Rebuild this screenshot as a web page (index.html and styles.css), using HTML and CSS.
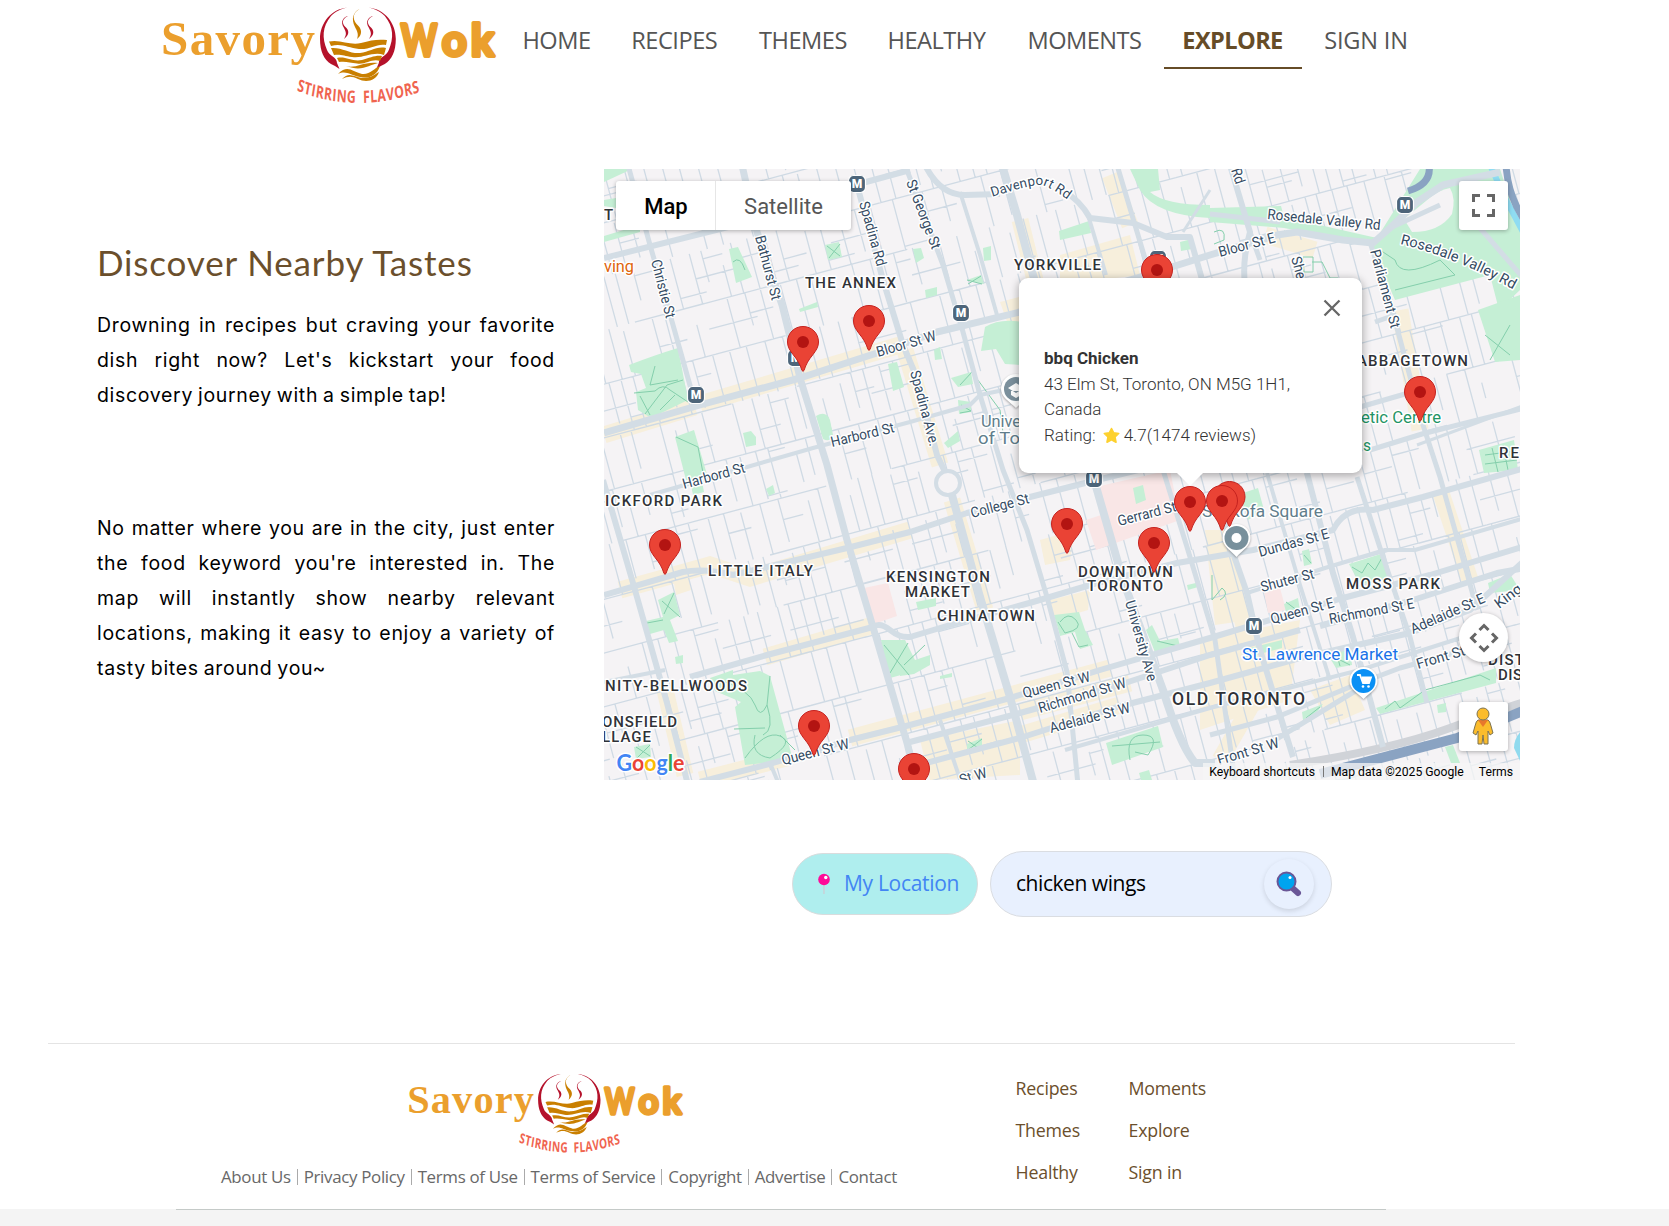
FILE: index.html
```html
<!DOCTYPE html>
<html lang="en">
<head>
<meta charset="utf-8">
<title>Savory Wok - Explore</title>
<link rel="stylesheet" href="styles.css">
</head>
<body>
<svg class="defs" width="0" height="0" aria-hidden="true">
  <symbol id="logo" viewBox="160 4 338 102" overflow="visible">
    <text class="logo-savory" x="161" y="54.500" textLength="154">Savory</text>
    <text class="logo-wok" y="56"><tspan x="401" textLength="36" lengthAdjust="spacingAndGlyphs">W</tspan><tspan x="442">o</tspan><tspan x="471">k</tspan></text>
    <g fill="#b5122b">
      <path d="M347.500 7.500C331 9 320 23 320 39C320 51 324 60 331 64L335 66L339.500 69L337 63C337 57 329 56 327 50C322 38 322 27 331 16C336 11 341 9 347.500 7.500Z"/>
      <path d="M347.500 7.500C331 9 320 23 320 39C320 51 324 60 331 64L335 66L339.500 69L337 63C337 57 329 56 327 50C322 38 322 27 331 16C336 11 341 9 347.500 7.500Z" transform="matrix(-1 0 0 1 715.800 0)"/>
      <path d="M348 16C340 20 343 25 346.500 28C350 32 348 36 344 39C347 34 346 32 344 28C340 22 343 17 348 16Z"/>
      <path d="M373 16C365 20 368 25 371.500 28C375 32 373 36 369 39C372 34 371 32 369 28C365 22 368 17 373 16Z"/>
    </g>
    <g fill="#c97f00">
      <path d="M359.500 9C351 14 353 21 358.500 26C363 31 361 36 357 39C359 34 357 31 355 27C351 19 353 12 359.500 9Z"/>
      <path d="M329 41.500C341 39 350 46 361 43C371 40 378 39 387 40L386 45C377 43 370 50 359 49C348 48 342 43 331 46Z"/>
      <path d="M331 48C342 47 350 54 360 53C370 52 376 46 386 48L384 55C373 51 363 59 352 57C344 56 341 54 334 55Z"/>
      <path d="M337 58C346 56 352 62 362 60C370 58 375 55 382 56L380 61C372 58 366 65 357 63.500C350 62.500 345 61 339 62Z"/>
      <path d="M346 66C356 69 363 61 378 63C369 65 362 72 346 66Z"/>
      <path d="M338 74C348 64 352 72 362 74C370 75 374 68 380 66C377 76 368 79 360 77C350 75 346 70 338 74Z"/>
      <path d="M342 79C349 71 354 77 362 78C370 78 374 75 379 72C376 81 366 83 358 79C352 76 348 76 342 79Z"/>
    </g>
    <g transform="scale(.72 1)">
      <path id="tagline" fill="none" d="M412 90.500Q498 116 592 89.500"/>
      <text class="logo-tag"><textPath href="#tagline">STIRRING&#160; FLAVORS</textPath></text>
    </g>
  </symbol>
</svg>

<header class="header">
  <svg class="logo"><use href="#logo"/></svg>
  <nav class="nav">
    <a>HOME</a><a>RECIPES</a><a>THEMES</a><a>HEALTHY</a><a>MOMENTS</a><a class="active">EXPLORE</a><a>SIGN IN</a>
  </nav>
</header>

<main class="main">
  <section class="intro">
    <h1>Discover Nearby Tastes</h1>
    <p>Drowning in recipes but craving your favorite dish right now? Let's kickstart your food discovery journey with a simple tap!</p>
    <p>No matter where you are in the city, just enter the food keyword you're interested in. The map will instantly show nearby relevant locations, making it easy to enjoy a variety of tasty bites around you~</p>
  </section>

  <section class="explore">
    <div class="map">
      <svg id="map" class="map-canvas" viewBox="604 169 916 611">
        <rect x="604" y="169" width="916" height="611" fill="#f5f3f5"/>
        <g id="shops" fill="#f7efdc"></g>
        <g id="minor" fill="none" stroke="#cfdae4" stroke-width="1.300"></g>
        <g fill="#f9e6e6">
          <path d="M1100 486L1170 470L1180 520L1096 550L1086 520L1104 514Z"/>
          <path d="M864 588L888 583L897 616L874 624Z"/><path d="M1264 592L1280 588L1286 610L1268 613Z"/>
        </g>
        <g id="parks" fill="#c5efd5"></g>
        <g id="paths" fill="none" stroke="#84cfac" stroke-width="1"></g>
        <path d="M1490 165L1506 200L1530 245" fill="none" stroke="#8fdcf2" stroke-width="6"/>
        <path d="M1506 165Q1508 200 1530 228M1429 165Q1432 184 1408 191" fill="none" stroke="#8aa3c2" stroke-width="7"/>
        <path d="M1514 748Q1514 738 1522 730V765Z" fill="#90daee"/>
        <path d="M1290 765Q1390 750 1450 728T1525 702" fill="none" stroke="#d0d3d8" stroke-width="8"/>
        <path d="M1320 774L1457 738L1525 710" fill="none" stroke="#8aa3c2" stroke-width="10"/>
        <g id="major" fill="none" stroke="#d3dde5" stroke-width="6" stroke-linejoin="round"></g>
        <circle cx="948" cy="483" r="12" fill="#f5f3f5" stroke="#d3dde5" stroke-width="4"/>
        <g id="metro"></g>
        <g id="labels"></g>
        <g id="places"></g>
        <g class="pois">
          <path d="M1001 389a15 15 0 1 1 30 0c0 8-8 12-15 19c-7-7-15-11-15-19Z" fill="#fff"/>
          <circle cx="1016" cy="389" r="12" fill="#7b909c"/>
          <path d="M1008 388l8-5l8 5l-8 5ZM1011 391v4l5 3l5-3v-4" fill="#fff"/>
          <path d="M1222.500 538a14 14 0 1 1 28 0c0 8-8 12-14 19c-6-7-14-11-14-19Z" fill="#fff"/>
          <circle cx="1236.500" cy="538" r="12" fill="#78909c"/><circle cx="1236.500" cy="538" r="5" fill="#fff"/>
          <path d="M1349.500 681a14 14 0 1 1 28 0c0 8-8 12-14 18c-6-6-14-10-14-18Z" fill="#fff"/>
          <circle cx="1363.500" cy="681" r="12" fill="#0a90f5"/>
          <path d="M1357 675h3l3 8h6l2-5.500h-9" fill="none" stroke="#fff" stroke-width="1.800"/>
          <path d="M1361.500 678h9l-2 5h-5.500Z" fill="#fff"/>
          <circle cx="1363" cy="686.500" r="1.300" fill="#fff"/><circle cx="1368.500" cy="686.500" r="1.300" fill="#fff"/>
        </g>
        <g id="markers"></g>
        <g class="google">
          <text x="616.500" y="770.500" textLength="68" lengthAdjust="spacingAndGlyphs"><tspan fill="#4285f4">G</tspan><tspan fill="#ea4335">o</tspan><tspan fill="#fbbc04">o</tspan><tspan fill="#4285f4">g</tspan><tspan fill="#34a853">l</tspan><tspan fill="#ea4335">e</tspan></text>
        </g>
      </svg>

      <div class="map-type"><button class="selected">Map</button><button>Satellite</button></div>
      <button class="control fullscreen"><svg width="23" height="23" viewBox="0 0 23 23"><path d="M1.500 8V1.500H8M15 1.500H21.500V8M21.500 15V21.500H15M8 21.500H1.500V15" fill="none" stroke="#666" stroke-width="3"/></svg></button>
      <button class="control camera"><svg width="30" height="30" viewBox="0 0 30 30"><path d="M10.500 7L15 2.500L19.500 7M10.500 23L15 27.500L19.500 23M7 10.500L2.500 15L7 19.500M23 10.500L27.500 15L23 19.500" fill="none" stroke="#666" stroke-width="3"/></svg></button>
      <button class="control pegman"><svg width="22" height="38" viewBox="0 0 22 38"><path d="M6 13H16Q18 14 19 19L21 26L18 28L16 24V37H12L11 28L10 37H6V24L4 28L1 26L3 19Q4 14 6 13Z" fill="#fbbc2c" stroke="#7d7351" stroke-width="1"/><path d="M6 13H16L11 20Z" fill="#e8772c"/><circle cx="11" cy="7" r="6" fill="#fbbc2c" stroke="#7d7351" stroke-width="1"/></svg></button>
      <div class="attribution"><span>Keyboard shortcuts</span><i></i><span>Map data ©2025 Google</span><span class="terms">Terms</span></div>

      <article class="info">
        <svg class="close" width="18" height="18" viewBox="0 0 18 18"><path d="M1.500 1.500L16.500 16.500M16.500 1.500L1.500 16.500" stroke="#666" stroke-width="2.300"/></svg>
        <strong>bbq Chicken</strong>
        <span>43 Elm St, Toronto, ON M5G 1H1,</span>
        <span>Canada</span>
        <span class="rating">Rating: <svg width="17" height="17" viewBox="0 0 17 17"><path d="M8.500 1.500L10.700 5.800L15.700 6.500L12 10L13 15.200L8.500 12.800L4 15.200L5 10L1.300 6.500L6.300 5.800Z" fill="#fdd12f" stroke="#fdd12f" stroke-width="1.600" stroke-linejoin="round"/></svg>4.7(1474 reviews)</span>
      </article>
    </div>

    <div class="search-row">
      <button class="location">
        <svg width="14" height="24" viewBox="0 0 14 24"><rect x="6.200" y="10" width="1.500" height="12" fill="#c9d2d8"/><circle cx="7" cy="7.500" r="5.800" fill="#ff0a98"/><circle cx="8.800" cy="5.500" r="1.700" fill="#fff"/></svg>
        <span>My Location</span>
      </button>
      <div class="search">
        <span>chicken wings</span>
        <button><svg width="26" height="26" viewBox="0 0 26 26"><path d="M16.500 17L22 22" stroke="#6a5797" stroke-width="6" stroke-linecap="round"/><circle cx="10.500" cy="10.500" r="9" fill="#00a4ef" stroke="#6a5797" stroke-width="2"/><circle cx="14" cy="6.500" r="1.500" fill="#fff"/></svg></button>
      </div>
    </div>
  </section>
</main>

<footer class="footer">
  <div class="footer-inner">
    <div class="footer-brand">
      <svg class="footer-logo"><use href="#logo"/></svg>
      <p class="legal"><a>About Us</a><i></i><a>Privacy Policy</a><i></i><a>Terms of Use</a><i></i><a>Terms of Service</a><i></i><a>Copyright</a><i></i><a>Advertise</a><i></i><a>Contact</a></p>
    </div>
    <div class="footer-links"><a>Recipes</a><a>Moments</a><a>Themes</a><a>Explore</a><a>Healthy</a><a>Sign in</a></div>
  </div>
</footer>
<div class="page-end"></div>
<script src="map.js"></script>
</body>
</html>
```
FILE: styles.css
```css
* { box-sizing: border-box; }
body { margin: 0; height: 1226px; overflow: hidden; display: flex; flex-direction: column; background: #fff; font-family: "Open Sans", "Noto Sans", sans-serif; color: #000; }
button { border: 0; padding: 0; font: inherit; }
.defs { position: absolute; }

.logo-savory { font: 700 49px "Liberation Serif", serif; fill: #eb9f2d; }
.logo-wok { font: 700 43px "Lato", sans-serif; fill: #eb9f2d; stroke: #eb9f2d; stroke-width: 4; stroke-linejoin: round; }
.logo-tag { font: 700 17px "Open Sans", sans-serif; letter-spacing: .6px; fill: #f0644f; }

.header { flex: none; height: 169px; padding: 4px 0 0 160px; display: flex; align-items: flex-start; }
.logo { width: 338px; height: 102px; overflow: visible; }
.nav { margin-left: 5px; display: grid; grid-template-columns: 107px 128.5px 129px 138px 158px 138px 129px; }
.nav a { height: 65px; padding-top: 20px; font-size: 23.6px; line-height: 33px; letter-spacing: -.5px; text-align: center; color: #555; white-space: nowrap; }
.nav a:last-child { letter-spacing: -.2px; }
.nav .active { font-weight: 700; letter-spacing: -.6px; color: #664c27; border-bottom: 2px solid #664c27; }

.main { flex: none; height: 874px; display: flex; padding-left: 97px; }
.intro { width: 458px; margin-right: 49px; padding-top: 68px; }
.intro h1 { margin: 0; font: 400 35px/50px "Lato", sans-serif; letter-spacing: .85px; color: #6b4f2c; white-space: nowrap; }
.intro p { margin: 21px 0 0; font: 400 19.5px/35.2px "Inter", sans-serif; letter-spacing: .68px; word-spacing: -1.2px; text-align: justify; }
.intro p + p { margin-top: 97px; }

.explore { width: 916px; }
.map { position: relative; width: 916px; height: 611px; overflow: hidden; font-family: "Roboto", sans-serif; }
.map-canvas { display: block; width: 916px; height: 611px; }
.map-canvas text { font-family: "Roboto", sans-serif; paint-order: stroke; stroke: #fff; stroke-width: 3px; stroke-linejoin: round; }
.map-canvas .street { font-size: 14.5px; fill: #344b63; }
.map-canvas .area { font-size: 15px; font-weight: 500; fill: #2f3237; }
.map-canvas .metro { font-size: 12px; font-weight: 900; fill: #fff; stroke: none; text-anchor: middle; }
.map-canvas .google text { font-family: "Lato", sans-serif; font-size: 23px; font-weight: 700; }
.pois { filter: drop-shadow(0 1px 1px rgba(0,0,0,.35)); }

.map-type { position: absolute; left: 12px; top: 12px; width: 235px; height: 49px; display: grid; grid-template-columns: 100px 135px; background: #fff; border-radius: 3px; box-shadow: 0 1px 4px rgba(0,0,0,.3); font-size: 22px; }
.map-type button { padding: 2px 0 0; background: none; color: #565656; }
.map-type .selected { padding-left: 1px; font-weight: 500; color: #000; border-right: 1px solid #e6e6e6; }
.control { position: absolute; left: 855px; width: 49px; height: 49px; display: grid; place-items: center; background: #fff; border-radius: 3px; box-shadow: 0 1px 4px rgba(0,0,0,.3); }
.fullscreen { top: 12px; }
.camera { top: 444px; border-radius: 50%; }
.pegman { top: 533px; }
.pegman svg { margin: -2px 2px 0 0; }
.attribution { position: absolute; right: 0; bottom: 0; height: 17px; display: flex; align-items: center; padding: 0 7px 0 6px; background: rgba(245,245,245,.75); font-size: 12.2px; white-space: nowrap; }
.attribution i { width: 1px; height: 11px; margin: 0 7px 0 8px; background: #777; }
.attribution .terms { margin-left: 15px; }

.info { position: absolute; left: 415px; top: 109px; width: 343px; height: 195px; padding: 68px 25px 0; background: #fff; border-radius: 9px; box-shadow: 0 2px 8px 1px rgba(0,0,0,.3); display: flex; flex-direction: column; font-weight: 300; font-size: 17.05px; line-height: 25.7px; color: #333; white-space: nowrap; }
.info::after { content: ""; position: absolute; left: 157px; bottom: -13px; border: 14px solid transparent; border-top-color: #fff; border-bottom: 0; }
.info strong { font-weight: 700; font-size: 17px; }
.info .close { position: absolute; right: 21px; top: 21px; }
.rating { display: flex; align-items: center; }
.rating svg { margin: 0 4px 0 7px; }

.search-row { display: flex; align-items: center; justify-content: center; gap: 12px; margin-top: 71px; font-size: 21px; }
.location { width: 186px; height: 62px; display: flex; align-items: center; padding-left: 24px; border: 1px solid #d9dcdd; border-radius: 31px; background: #afeeee; color: #4285f4; white-space: nowrap; letter-spacing: -.3px; }
.location span { margin: -2px 0 0 13px; }
.search { width: 342px; height: 66px; display: flex; align-items: center; justify-content: space-between; padding: 0 17px 0 25px; border: 1px solid #dadde2; border-radius: 33px; background: #e8f0fe; letter-spacing: -.45px; }
.search span { margin-top: -2px; }
.search button { width: 50px; height: 50px; display: grid; place-items: center; border-radius: 50%; background: #e8f0fe; box-shadow: 0 2px 5px rgba(0,0,0,.13); }

.footer { flex: none; width: 1467px; height: 166px; margin-left: 48px; border-top: 1px solid #e4e4e4; padding-left: 128px; }
/* The closing rule sits on top of the grey strip below */
.footer-inner { position: relative; width: 1210px; height: 166px; display: flex; border-bottom: 1px solid #c5cac8; padding: 27px 0 0 45px; }
.footer-brand { width: 676px; }
.footer-logo { display: block; width: 279px; height: 84px; margin-left: 185px; overflow: visible; }
.legal { display: flex; justify-content: space-between; align-items: center; margin: 8px 0 0; font-size: 16.9px; line-height: 28px; letter-spacing: -.32px; color: #686868; white-space: nowrap; }
.legal i { width: 1px; height: 16px; background: #aaa; }
.footer-links { margin: -4px 0 0 118.5px; display: grid; grid-template-columns: 113px 100px; grid-auto-rows: 42px; font-size: 17.8px; line-height: 42px; letter-spacing: -.2px; color: #6b4f2c; }
.page-end { flex: 1; background: #f4f4f4; }
```
FILE: map.js
```js
const NS = 'http://www.w3.org/2000/svg';
const layer = id => document.getElementById(id);
function add(parent, tag, attrs, text) {
  const el = document.createElementNS(NS, tag);
  for (const k in attrs) el.setAttribute(k, attrs[k]);
  if (text) el.textContent = text;
  parent.appendChild(el);
  return el;
}
let seed = 42;
const rnd = () => (seed = (seed * 16807) % 2147483647) / 2147483647;

// Residential street grid, tilted like the city: u runs east, v runs south.
const at = (u, v) => [(604 + u * 0.966 + v * 0.26).toFixed(1), (169 - u * 0.258 + v * 0.965).toFixed(1)];
let d = '';
for (let row = -1; row < 17; row++) {
  const v0 = row * 52;
  for (let u = -220; u < 960; u += 11 + rnd() * 10) {
    if (rnd() < 0.14) continue;
    const a = v0 + (rnd() < 0.25 ? rnd() * 22 : 0);
    const b = v0 + 52 - (rnd() < 0.25 ? rnd() * 22 : 0);
    d += 'M' + at(u, a) + 'L' + at(u, b);
    if (rnd() < 0.2) { const m = a + (b - a) * rnd(); d += 'M' + at(u, m) + 'L' + at(u + 14 + rnd() * 20, m); }
  }
  for (let u = -220; u < 960; u += 70) {
    if (rnd() < 0.8) d += 'M' + at(u, v0) + 'L' + at(u + 72, v0);
    if (rnd() < 0.3) d += 'M' + at(u, v0 + 26) + 'L' + at(u + 50, v0 + 26);
  }
}
add(layer('minor'), 'path', { d });

// Commercial strips
for (const s of ['M604 435L695 407M700 404L900 345', 'M620 590L710 565L750 578L910 530', 'M765 657L870 626', 'M700 780L790 757M850 738L1010 695L1110 668', 'M905 350L940 465M952 500L985 610', 'M1020 220L1035 280M1110 175L1130 225', 'M1400 310L1420 430', 'M665 690L685 775', 'M1020 712L1130 683M1020 735L1120 705', 'M1220 530L1260 690L1220 760', 'M1265 235L1315 250', 'M1440 490L1470 580'])
  add(layer('shops'), 'path', { d: s, fill: 'none', stroke: '#f7efdc', 'stroke-width': 17 });
for (const s of ['M1000 302L1045 290L1050 320L1010 330Z', 'M1060 255L1130 235L1140 275L1060 285Z', 'M1050 600L1090 590L1088 610L1055 620Z', 'M673 578L688 573L691 590L676 595Z', 'M1205 530L1225 530L1250 620L1215 625Z', 'M1200 640L1300 620L1290 700L1200 730Z', 'M1310 690L1350 675L1365 710L1330 725Z', 'M1040 540L1075 530L1070 560L1045 565Z', 'M920 740L1020 720L1020 775L930 780Z'])
  add(layer('shops'), 'path', { d: s });

// Parks and green space
for (const s of [
  'M604 169H632L604 182Z', 'M604 200L616 198V208L604 206Z', 'M604 236L640 225V232L604 242Z',
  'M629 365Q655 355 678 348L688 400L651 418L638 410L636 392L646 388L641 374L631 372Z',
  'M729 249L738 247L752 277L736 283Z', 'M825 245L839 242L842 257L828 260Z', 'M799 309L817 302L818 307L800 312Z',
  'M675 437L694 430L708 478L686 480Z', 'M688 470L700 470L704 492L693 495Z', 'M816 416q10-6 14 4l3 15q-3 8-10 4Z',
  'M743 433l8-2l5 6v8l-10 2z', 'M888 364L897 362L904 387L893 391Z', 'M766 489L773 485L775 493L769 496Z',
  'M658 600L674 592L680 615L670 620L678 641L669 643L664 630L650 634L646 621L663 617Z',
  'M675 657L683 655V663L676 664Z', 'M710 678L733 670V675L760 671L770 676L793 760L745 765L735 707L741 702L715 691Z',
  'M634 747L650 744L651 757L636 759Z', 'M881 640L905 640L912 672L890 678Z', 'M900 645L905 640L915 660L930 655V665L914 674L900 676Z',
  'M1059 231L1089 221L1091 233L1060 240Z', 'M983 248L991 246V260L984 261Z', 'M913 249l8-1l3 10l-8 5Z', 'M925 290l12-3v8l-11 3Z',
  'M985 327Q1000 318 1022 322V365L1005 364L996 349L981 351Z', 'M934 350l6-3l2 12l-7 1Z', 'M1130 169H1158L1160 190L1150 192Q1165 205 1210 205V218Q1155 215 1140 190Z',
  'M967 280l14-5l3 9z', 'M951 378l20-6l2 12l-15 3z', 'M958 400l13 2v10l-12 2z', 'M944 443l14-12l2 10l-12 7z', 'M1180 242l12-3v10l-11 2Z',
  'M1210 208L1281 206L1284 217L1377 238L1420 169H1500L1520 230V290L1499 310L1490 275L1395 300L1382 270L1372 245L1284 228L1210 222Z',
  'M1478 310L1520 295V360L1495 362Z', 'M1479 450L1514 440L1518 470L1484 473Z',
  'M1054 615L1079 612L1085 630L1093 645L1080 649L1075 632L1060 636Z', 'M1146 630L1152 625L1160 641L1178 638L1180 646L1155 652Z',
  'M1106 743L1158 726L1163 747L1112 765Z', 'M1139 773l10-3l3 10h-11Z', 'M967 744l15-6v10l-15 2z', 'M916 602l20-4v8l-18 4z', 'M940 676l12-3v4l-12 2z',
  'M1133 488l10-3l3 15l-10 4z', 'M1187 585l9-2l2 4l-10 3z', 'M1240 494L1258 488L1264 510L1248 520Z',
  'M1349 564L1384 553L1389 577L1360 585Z', 'M1302 551l7-2l3 15l-8 2z', 'M1284 604l14-6l2 13l-14 1z', 'M1242 650l40-10v8l-38 10z', 'M1328 655L1350 645L1352 665L1336 668Z',
  'M1376 708L1496 668V683L1380 714Z', 'M1302 712L1323 704L1310 722L1303 720Z', 'M1437 705l9-2v9l-8 1z', 'M1445 747l8-2l7 18h-9Z', 'M1488 583L1510 574L1520 590L1490 593Z'])
  add(layer('parks'), 'path', { d: s });
// Open ground inside the ravine park
add(layer('parks'), 'path', { d: 'M1404 219L1432 196Q1440 190 1450 188Q1456 198 1452 214Q1440 232 1412 232Z', fill: '#f5f3f5' });
add(layer('paths'), 'path', { d: 'M634 393L655 391Q663 383 670 390L688 402M645 414L667 385L683 380M660 410L675 395M640 396L650 415M655 366L650 385L678 380M676 437L698 447L704 478M662 601L680 617M674 593L664 614M647 623L663 620M720 680Q750 690 755 705T767 705L770 676M767 705Q775 730 763 735M734 729L765 728M745 758Q765 730 780 736T770 758Q750 755 755 735M780 735L795 750M636 747L650 756M650 745L637 758M884 645L909 675M908 643L890 673M1060 622Q1068 611 1076 620T1065 633L1058 622M1072 633L1079 647L1088 645M1112 746L1160 742M1130 760Q1125 735 1143 735T1148 755L1135 752M968 741L981 750M982 739L968 750M827 246L840 256M840 244L829 258M733 262Q740 255 745 270M967 280L982 284M981 276L968 284M1352 567L1362 573L1368 563L1375 570L1383 556M1286 602L1298 611M1304 555L1311 563M1330 655L1350 665M1335 648L1340 666M1385 709L1395 701L1400 708L1425 690L1480 675L1490 680M1306 718L1320 707M960 385L972 372L1000 410L1004 440M961 405L971 411L960 413M1485 455L1516 451M1485 464L1517 460M1492 448L1498 472M1503 445L1508 470M1485 335L1510 355M1510 325L1490 360M1380 250L1395 260Q1400 280 1440 260L1455 275L1395 290M1402 240L1450 250M925 645L904 665M1157 641L1178 646M1275 235l10-4M1214 232q12-6 10 8l-10 4M1303 257h10v15h-9zM1312 262h10l8 16h8M1212 575v25l10-12q8 6-2 12' });

// Arterial roads: [path, width]
for (const [path, w] of [
  ['M604 258L728 227L866 182L910 170', 6], ['M628 165L650 245L673 325L693 396', 5], ['M742 165L757 232L782 305L800 378L827 465L847 540L873 627L907 743L917 785', 7],
  ['M604 433L700 405L800 378L877 353L937 332L1020 312L1140 277L1210 255L1277 235L1297 232L1343 240L1373 243L1390 228L1417 202L1443 185L1500 172', 7],
  ['M857 185L883 280L903 345L917 378L937 455L945 472', 6], ['M952 495L980 597L1010 697L1034 785', 8], ['M905 165L943 265L963 332L980 395L1003 470L1027 530L1047 597L1067 672L1078 785', 5],
  ['M925 165Q940 195 965 195L1000 194M1062 190Q1080 200 1090 218L1133 223L1167 237H1190L1205 290', 6], ['M1002 165L1017 215L1033 275L1083 440L1097 490L1123 580L1163 690Q1180 745 1195 763H1215', 8],
  ['M960 192L980 255L997 315', 4], ['M1117 165L1147 265L1163 470L1187 547L1215 640L1235 780', 5], ['M1088 215L1106 275', 4],
  ['M1230 165L1250 232Q1242 260 1245 285M1225 520L1233 553L1247 593L1260 650L1293 757', 6], ['M1250 232L1260 260', 5],
  ['M1307 473L1333 573L1353 637L1383 747', 6], ['M1357 477L1383 557L1410 637L1427 703', 5], ['M1267 473L1300 585L1330 680', 4], ['M1370 242L1397 328L1423 425L1440 477L1467 573L1477 610', 5],
  ['M650 495L747 467L813 448L910 422L970 405L980 395L1013 388', 4], ['M604 595L683 572Q705 568 733 575L847 548L910 532L967 513L1030 497L1097 480L1200 455', 6],
  ['M690 677L767 655L873 627Q880 622 890 630T910 637L950 625L1033 602L1097 583L1177 563L1253 550L1333 530Q1345 506 1373 510L1423 497L1525 468', 6],
  ['M700 782L773 763L850 740L910 725L1010 698L1100 670L1210 638L1343 598L1430 575L1525 546', 6], ['M910 742L1020 713L1113 687L1210 655L1300 630M1320 626L1413 600L1497 573L1525 568', 6],
  ['M900 770L1023 737L1117 707L1210 683L1300 658L1410 633L1470 610L1525 560', 6], ['M1065 750L1210 708L1360 670L1470 635', 4], ['M1210 735L1277 717L1350 687L1400 668L1465 650M1270 743L1357 690', 5],
  ['M1247 593L1325 568L1385 550H1415L1525 518', 4], ['M603 480L633 583L667 703L688 785', 6], ['M1375 322L1395 315M1360 407L1405 394M1370 450L1422 434L1525 408', 5],
  ['M1390 228L1440 205M1480 228L1525 280M1210 214L1280 222', 5], ['M1417 445L1525 405', 3], ['M1183 232L1210 190', 3], ['M770 763L778 782', 4], ['M940 720L962 785', 4], ['M604 682L665 670', 4]])
  add(layer('major'), 'path', { d: path, 'stroke-width': w });

// Street names: text, baseline start, baseline end
for (const [t, x1, y1, x2, y2] of [
  ['Christie St', 651, 261, 666, 319], ['Bathurst St', 755, 237, 772, 301], ['Spadina Rd', 859, 203, 877, 267], ['Bloor St W', 878, 357, 937, 340],
  ['Harbord St', 832, 447, 895, 432], ['Harbord St', 684, 489, 746, 472], ['St George St', 906, 182, 932, 250], ['Spadina Ave.', 910, 372, 930, 447],
  ['Rosedale Valley Rd', 1267, 219, 1380, 230], ['Bloor St E', 1220, 257, 1276, 242], ['She', 1291, 258, 1297, 280], ['Rd', 1231, 170, 1236, 185], ['Parliament St', 1370, 251, 1391, 329],
  ['College St', 972, 518, 1030, 503], ['Gerrard St', 1119, 526, 1177, 511], ['University Ave', 1125, 602, 1148, 682], ['Queen St W', 1024, 698, 1091, 681],
  ['Richmond St W', 1040, 713, 1127, 687], ['Adelaide St W', 1051, 733, 1131, 712], ['Queen St W', 783, 765, 850, 748], ['St W', 961, 785, 988, 777],
  ['Dundas St E', 1260, 557, 1330, 538], ['Shuter St', 1262, 592, 1315, 578], ['Queen St E', 1272, 624, 1335, 607], ['Richmond St E', 1330, 624, 1415, 608],
  ['Adelaide St E', 1413, 634, 1486, 602], ['King', 1499, 609, 1523, 591], ['Front St', 1418, 669, 1466, 655], ['Front St W', 1219, 765, 1280, 747]]) {
  const angle = Math.atan2(y2 - y1, x2 - x1) * 180 / Math.PI;
  add(layer('labels'), 'text', { class: 'street', transform: `translate(${x1} ${y1}) rotate(${angle})`, textLength: Math.hypot(x2 - x1, y2 - y1), lengthAdjust: 'spacingAndGlyphs' }, t);
}
for (const [id, path, t] of [['davenport', 'M992 197Q1032 184 1041 185T1076 206', 'Davenport Rd'], ['rosedale', 'M1400 244Q1455 257 1514 290', 'Rosedale Valley Rd']]) {
  add(layer('labels'), 'path', { id, d: path, fill: 'none' });
  const el = add(layer('labels'), 'text', { class: 'street', style: id === 'davenport' ? 'font-size:13.500px' : '' });
  add(el, 'textPath', { href: '#' + id }, t);
}

// Neighbourhoods: text, left, right, baseline
for (const [t, x1, x2, y] of [
  ['THE ANNEX', 805, 896, 288], ['YORKVILLE', 1014, 1101, 270], ['ICKFORD PARK', 605, 722, 506], ['LITTLE ITALY', 708, 813, 576], ['KENSINGTON', 886, 990, 582], ['MARKET', 905, 970, 597],
  ['CHINATOWN', 937, 1035, 621], ['DOWNTOWN', 1078, 1173, 577], ['TORONTO', 1087, 1163, 591], ['MOSS PARK', 1346, 1440, 589], ['NITY-BELLWOODS', 605, 747, 691],
  ['ONSFIELD', 602, 677, 727], ['LLAGE', 602, 651, 742], ['ABBAGETOWN', 1357, 1468, 366], ['RE', 1499, 1519, 458], ['DIST', 1488, 1524, 665], ['DIS', 1498, 1522, 680], ['T', 604, 612, 220]])
  add(layer('places'), 'text', { class: 'area', x: x1, y, textLength: x2 - x1 }, t);
add(layer('places'), 'text', { class: 'area', x: 1172, y: 705, textLength: 133, style: 'font-size:17.500px' }, 'OLD TORONTO');

// Points of interest: text, left, width, baseline, colour
for (const [t, x, w, y, fill] of [
  ['ving', 604, 30, 272, '#e0640a'], ['Unive', 981, 40, 427, '#607d8b'], ['of To', 978, 42, 444, '#607d8b'], ['Sankofa Square', 1202, 121, 517, '#607d8b'],
  ['St. Lawrence Market', 1242, 156, 660, '#1a73e8'], ['etic Centre', 1361, 80, 423, '#1f9465'], ['s', 1363, 8, 451, '#1f9465']])
  add(layer('places'), 'text', { x, y, textLength: w, lengthAdjust: 'spacingAndGlyphs', fill, 'font-size': 17 }, t);

for (const [x, y] of [[857, 184], [696, 395], [796, 358], [961, 313], [1094, 479], [1158, 259], [1405, 205], [1254, 626]]) {
  add(layer('metro'), 'rect', { x: x - 8.5, y: y - 8.5, width: 17, height: 17, rx: 5, fill: '#4d657a', stroke: '#fff', 'stroke-width': 1.2 });
  add(layer('metro'), 'text', { class: 'metro', x, y: y + 4.3 }, 'M');
}
for (const [x, y] of [[803, 342], [869, 321], [1157, 270], [1420, 392], [665, 545], [1067, 524], [1154, 543], [1190, 502], [1229.5, 497], [1222, 501], [814, 726], [914, 769]]) {
  const g = add(layer('markers'), 'g', { transform: `translate(${x} ${y})` });
  add(g, 'path', { d: 'M0 -15.500C-8.500 -15.500 -15.500 -9 -15.500 0C-15.500 5 -13 8.500 -10 12.500C-5.500 18 -3 22 -1 28.500Q0 30 1 28.500C3 22 5.500 18 10 12.500C13 8.500 15.500 5 15.500 0C15.500 -9 8.500 -15.500 0 -15.500Z', fill: '#ea4335', stroke: '#c5221f', 'stroke-width': 1 });
  add(g, 'circle', { r: 6, fill: '#b31412' });
}
```
